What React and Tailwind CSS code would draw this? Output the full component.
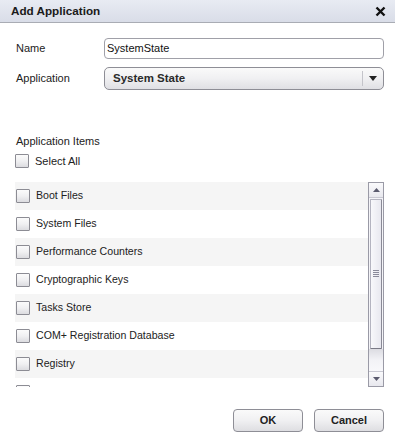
import React from "react";

const items = [
  "Boot Files",
  "System Files",
  "Performance Counters",
  "Cryptographic Keys",
  "Tasks Store",
  "COM+ Registration Database",
  "Registry",
  "",
];

function Box() {
  return (
    <div className="w-[14px] h-[14px] shrink-0 border border-[#8c8c94] rounded-[1px] bg-gradient-to-b from-[#fbfbfb] via-[#f0f0f2] to-[#dcdce0]" />
  );
}

export default function App() {
  return (
    <div
      className="w-[395px] h-[443px] bg-white relative overflow-hidden text-[11px] text-[#222]"
      style={{ fontFamily: '"Liberation Sans", Arial, sans-serif' }}
    >
      <div className="h-[23px] border-b border-[#a9acb4] bg-gradient-to-b from-[#e8ebf3] to-[#d9dde8] flex items-center justify-between pl-[11px] pr-[9px]">
        <span className="font-bold text-[11.7px] text-[#1a1a1a]">Add Application</span>
        <svg width="11" height="11" viewBox="0 0 11 11">
          <path d="M1.5 1.5 L9.5 9.5 M9.5 1.5 L1.5 9.5" stroke="#111" strokeWidth="2.4" />
        </svg>
      </div>

      <div className="flex items-center mt-[15px] pl-[16px]">
        <span className="w-[88px]">Name</span>
        <div className="w-[280px] h-[21px] border border-[#a0a0a8] rounded-[4px] flex items-center pl-[2px] text-[11px] text-[#111]">
          SystemState
        </div>
      </div>

      <div className="flex items-center mt-[8px] pl-[16px]">
        <span className="w-[88px]">Application</span>
        <div className="w-[280px] h-[23px] border border-[#8e8e96] rounded-[5px] flex items-center bg-gradient-to-b from-[#fafafa] via-[#f0f0f2] to-[#e0e0e4]">
          <span className="flex-1 pl-[8px] font-bold text-[11.5px] text-[#2a2a2a]">System State</span>
          <div className="w-px h-[15px] bg-[#c4c4ca]" />
          <div className="w-[20px] flex justify-center">
            <svg width="8" height="5" viewBox="0 0 8 5">
              <path d="M0 0 H8 L4 5 Z" fill="#222" />
            </svg>
          </div>
        </div>
      </div>

      <div className="pl-[16px] mt-[43px]">Application Items</div>
      <div className="flex items-center gap-[6px] pl-[15px] mt-[3px]">
        <Box />
        <span>Select All</span>
      </div>

      <div className="flex ml-[15px] mt-[13px] w-[369px] h-[205px]">
        <div className="flex-1 overflow-hidden">
          {items.map((t, i) => (
            <div
              key={i}
              className={`h-[28px] shrink-0 flex items-center gap-[6px] pl-px ${i % 2 === 0 ? "bg-[#f5f5f5]" : "bg-white"}`}
            >
              <Box />
              <span className="text-[10.6px] text-[#222]">{t}</span>
            </div>
          ))}
        </div>
        <div className="w-[16px] border border-[#9a9aa6] bg-[#f4f4f8] flex flex-col">
          <div className="h-[15px] border-b border-[#c8c8d2] bg-gradient-to-b from-[#fafafc] to-[#e8e8ee] flex items-center justify-center">
            <svg width="7" height="4" viewBox="0 0 7 4"><path d="M0 4 H7 L3.5 0 Z" fill="#5a5a6e" /></svg>
          </div>
          <div className="h-[150px] mx-px mt-px border border-[#b4b4c0] border-b-[#7a7a86] border-r-[#8a8a96] rounded-[1px] bg-gradient-to-r from-[#f8f8fb] to-[#e8e8ef] flex items-center justify-center">
            <svg width="6" height="8" viewBox="0 0 6 8">
              <path d="M0 0.5 H6 M0 2.5 H6 M0 4.5 H6 M0 6.5 H6" stroke="#8a8a9a" strokeWidth="1" />
            </svg>
          </div>
          <div className="flex-1 bg-gradient-to-b from-[#dcdce2] via-[#f2f2f6] to-[#f8f8fb]" />
          <div className="h-[15px] border-t border-[#c8c8d2] bg-gradient-to-b from-[#fafafc] to-[#e8e8ee] flex items-center justify-center">
            <svg width="7" height="4" viewBox="0 0 7 4"><path d="M0 0 H7 L3.5 4 Z" fill="#5a5a6e" /></svg>
          </div>
        </div>
      </div>

      <div className="flex justify-end gap-[11px] pr-[11px] mt-[22px]">
        <button className="w-[70px] h-[23px] border border-[#8e8e96] rounded-[4px] bg-gradient-to-b from-[#fafafa] via-[#f0f0f2] to-[#dedee2] font-bold text-[11px] text-[#222]">
          OK
        </button>
        <button className="w-[70px] h-[23px] border border-[#8e8e96] rounded-[4px] bg-gradient-to-b from-[#fafafa] via-[#f0f0f2] to-[#dedee2] font-bold text-[11px] text-[#222]">
          Cancel
        </button>
      </div>
    </div>
  );
}
